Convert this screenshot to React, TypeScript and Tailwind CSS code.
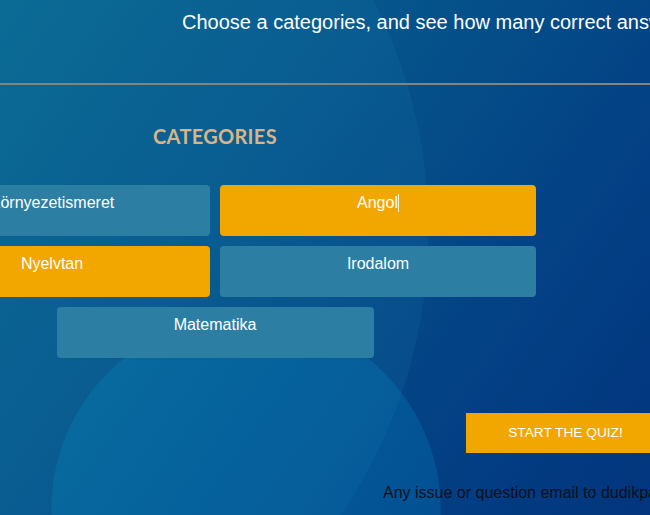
import React from "react";

const categories = [
  { name: "Környezetismeret", active: false },
  { name: "Angol", active: true, caret: true },
  { name: "Nyelvtan", active: true },
  { name: "Irodalom", active: false },
];

export default function App() {
  return (
    <div className="w-[650px] h-[515px] overflow-hidden font-['Liberation_Sans',Arial,sans-serif] bg-[radial-gradient(circle_195px_at_246px_510px,rgba(0,150,205,0.22)_99.6%,transparent_100%),radial-gradient(circle_507px_at_-78px_230px,rgba(40,150,190,0.1)_99.8%,transparent_100%),linear-gradient(125deg,#086690_0%,#05548b_40%,#033f84_75%,#02357d_100%)]">
      <div className="ml-[-106px] w-[900px]">
        <header className="h-[83px] pl-[288px] pt-[11px]">
          <p className="text-[20px] leading-[23px] text-white whitespace-nowrap">
            Choose a categories, and see how many correct answers you can give!
          </p>
        </header>
        <div className="h-[2px] bg-[#86837a]" />
        <main className="w-[642px]">
          <h2 className="mt-[39px] text-center font-['Lato',sans-serif] font-bold text-[20px] leading-[24px] tracking-[0.3px] text-[#d8b48b]">
            CATEGORIES
          </h2>
          <div className="mt-[37px] grid grid-cols-2 gap-[10px]">
            {categories.map((c) => (
              <div
                key={c.name}
                className={`h-[51px] rounded-[4px] pt-2 text-center text-[16px] leading-[19px] text-white ${
                  c.active ? "bg-[#f2a600]" : "bg-[#2c7fa3]"
                }`}
              >
                {c.name}
                {c.caret && <span className="inline-block w-px h-[18px] align-[-4px] bg-[#f5f0e6]" />}
              </div>
            ))}
            <div className="col-span-2 justify-self-center w-[317px] h-[51px] rounded-[4px] pt-2 text-center text-[16px] leading-[19px] text-white bg-[#2c7fa3]">
              Matematika
            </div>
          </div>
        </main>
        <div className="mt-[55px] pl-[572px]">
          <button className="w-[199px] h-[40px] bg-[#f2a600] text-white text-[13.7px] uppercase">
            Start the quiz!
          </button>
        </div>
        <p className="mt-[31px] pl-[489px] text-[16px] leading-[18px] text-[#0b1020] whitespace-nowrap">
          Any issue or question email to dudikpatrik@gmail.com
        </p>
      </div>
    </div>
  );
}
